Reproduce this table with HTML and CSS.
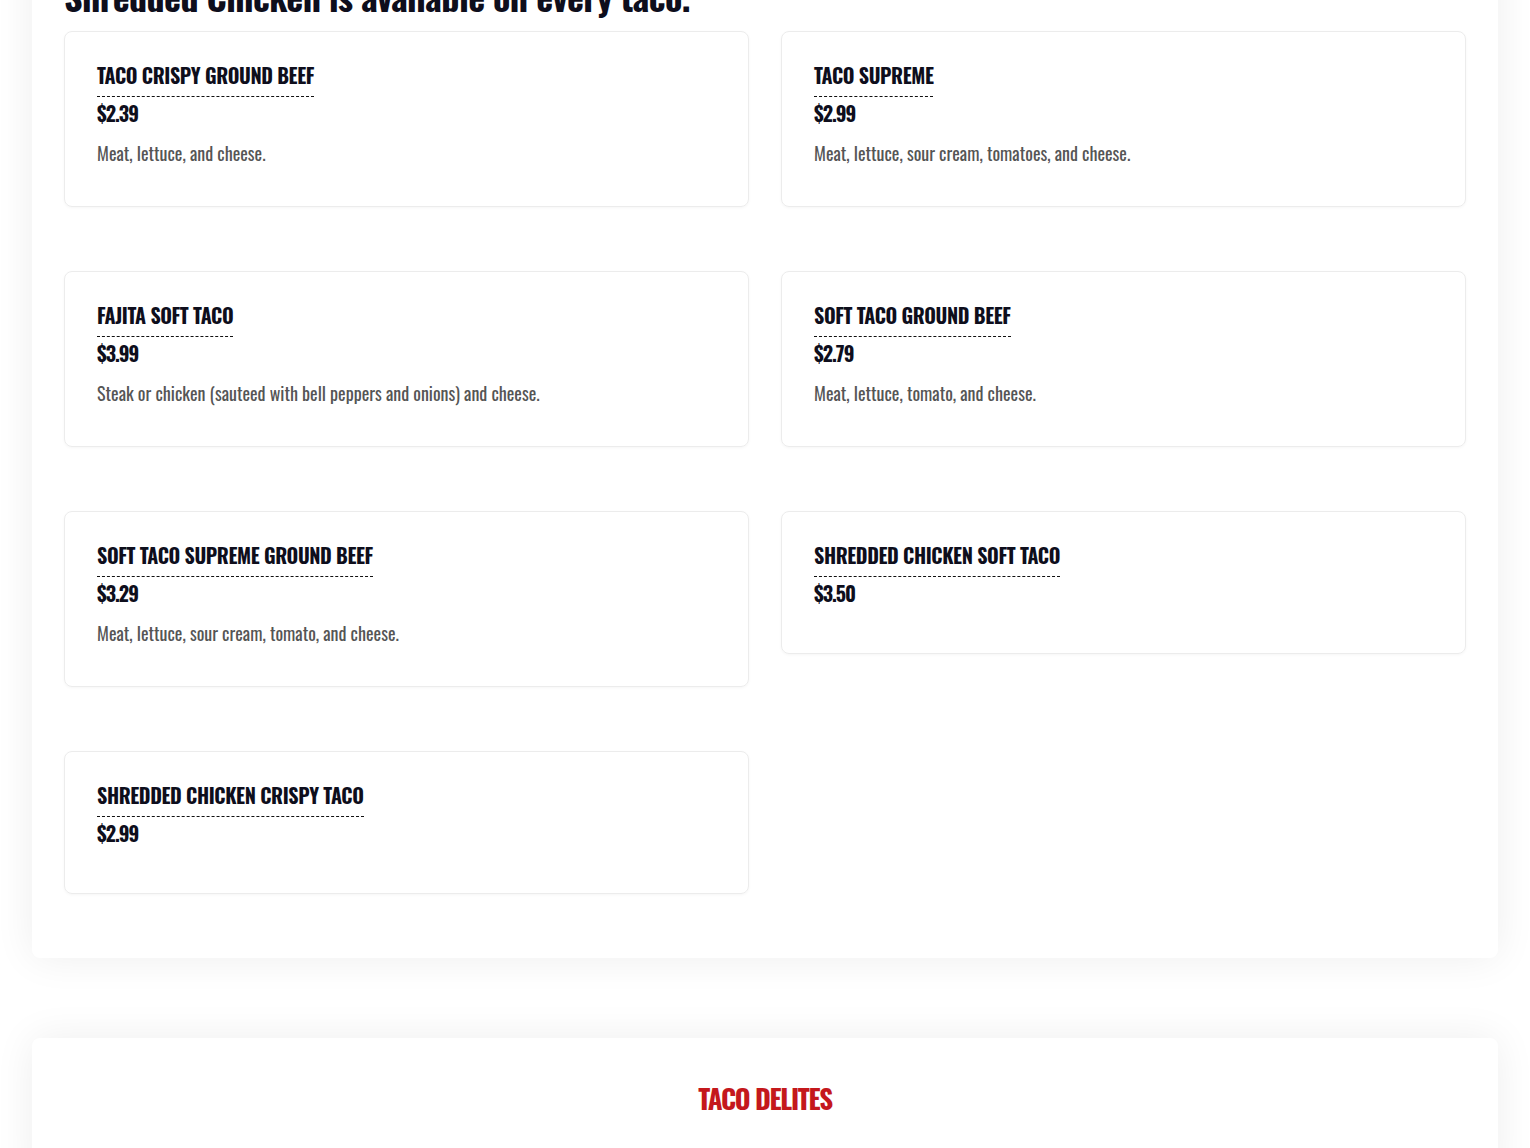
FILE: index.html
```html
<!DOCTYPE html>
<html lang="en">
  <head>
    <meta charset="UTF-8" />
    <meta name="viewport" content="width=device-width, initial-scale=1.0" />
    <title>Tacos Menu</title>
    <link rel="stylesheet" href="styles.css">
  </head>
  <body>
    <main class="page">
      <section class="menu-section">
        <h2 class="section-note">Shredded Chicken is available on every taco.</h2>
        <div class="menu-grid">
          <div class="menu-item">
            <h3 class="item-name">Taco Crispy Ground Beef</h3>
            <div class="item-price">$2.39</div>
            <p class="item-desc">Meat, lettuce, and cheese.</p>
          </div>
          <div class="menu-item">
            <h3 class="item-name">Taco Supreme</h3>
            <div class="item-price">$2.99</div>
            <p class="item-desc">Meat, lettuce, sour cream, tomatoes, and cheese.</p>
          </div>
          <div class="menu-item">
            <h3 class="item-name">Fajita Soft Taco</h3>
            <div class="item-price">$3.99</div>
            <p class="item-desc">Steak or chicken (sauteed with bell peppers and onions) and cheese.</p>
          </div>
          <div class="menu-item">
            <h3 class="item-name">Soft Taco Ground Beef</h3>
            <div class="item-price">$2.79</div>
            <p class="item-desc">Meat, lettuce, tomato, and cheese.</p>
          </div>
          <div class="menu-item">
            <h3 class="item-name">Soft Taco Supreme Ground Beef</h3>
            <div class="item-price">$3.29</div>
            <p class="item-desc">Meat, lettuce, sour cream, tomato, and cheese.</p>
          </div>
          <div class="menu-item">
            <h3 class="item-name">Shredded Chicken Soft Taco</h3>
            <div class="item-price">$3.50</div>
          </div>
          <div class="menu-item">
            <h3 class="item-name">Shredded Chicken Crispy Taco</h3>
            <div class="item-price">$2.99</div>
          </div>
        </div>
      </section>

      <section class="menu-section">
        <h2 class="section-title">Taco Delites</h2>
      </section>
    </main>
  </body>
</html>
```

FILE: styles.css
```css
body {
  font-family: "Oswald", "Liberation Sans Narrow", "DejaVu Sans Condensed", sans-serif;
  margin: 0;
  background-color: #ffffff;
  color: #0e0e1c;
}

.page {
  padding: 0 32px;
  margin-top: -68px;
  display: flex;
  flex-direction: column;
  gap: 80px;
}

.menu-section {
  background-color: #ffffff;
  border-radius: 8px;
  box-shadow: 0 0 40px rgba(0, 0, 0, 0.07);
  padding: 40px 32px 64px;
}

.section-note {
  margin: 0 0 11px;
  font-size: 36px;
  line-height: 48px;
  font-weight: 700;
  letter-spacing: -0.6px;
}

.section-title {
  margin: 2px 0 0;
  text-align: center;
  color: #c4181c;
  font-size: 27px;
  line-height: 36px;
  font-weight: 700;
  text-transform: uppercase;
  letter-spacing: -1.3px;
}

.menu-grid {
  display: grid;
  grid-template-columns: 1fr 1fr;
  gap: 64px 32px;
  align-items: start;
}

.menu-item {
  border: 1px solid #ececec;
  border-radius: 8px;
  padding: 31px 32px 32px;
  box-shadow: 0 1px 3px rgba(0, 0, 0, 0.04);
}

.item-name {
  display: inline-block;
  margin: 0;
  padding-bottom: 9px;
  border-bottom: 1px dashed #111;
  font-size: 20px;
  line-height: 24px;
  font-weight: 700;
  text-transform: uppercase;
  letter-spacing: -0.4px;
}

.item-price {
  margin: 4px 0 16px;
  font-size: 20px;
  line-height: 24px;
  font-weight: 700;
  letter-spacing: -1px;
}

.item-desc {
  margin: 4px 0 9px;
  color: #555;
  font-size: 18px;
  line-height: 24px;
}
```
